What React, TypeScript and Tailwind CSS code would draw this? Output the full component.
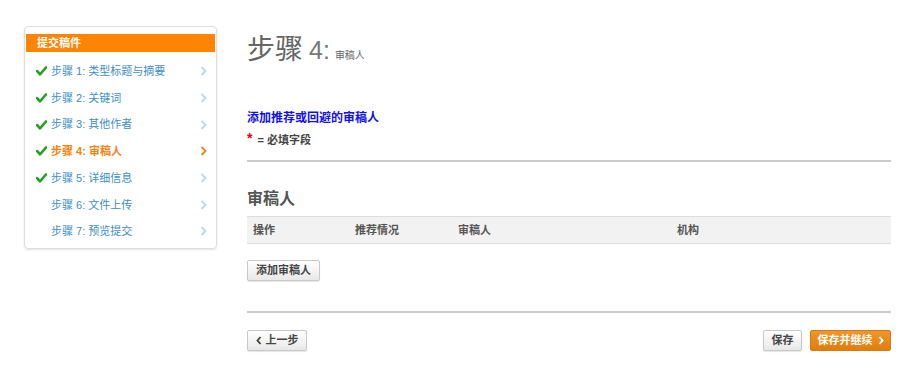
import React from "react";

const steps = [
  { label: "步骤 1: 类型标题与摘要", done: true },
  { label: "步骤 2: 关键词", done: true },
  { label: "步骤 3: 其他作者", done: true },
  { label: "步骤 4: 审稿人", done: true, active: true },
  { label: "步骤 5: 详细信息", done: true },
  { label: "步骤 6: 文件上传", done: false },
  { label: "步骤 7: 预览提交", done: false },
];

function Check() {
  return (
    <svg width="11" height="10" viewBox="0 0 11 10" className="shrink-0">
      <path d="M1.2 5.2 L4 8.3 L10 1.5" fill="none" stroke="#22a01e" strokeWidth="2.6" strokeLinecap="round" strokeLinejoin="round" />
    </svg>
  );
}

function Chevron({ color }: { color: string }) {
  return (
    <svg width="7" height="10" viewBox="0 0 7 10">
      <path d="M1.5 1 L5.5 5 L1.5 9" fill="none" stroke={color} strokeWidth="1.8" />
    </svg>
  );
}

export default function App() {
  return (
    <div
      className="w-[900px] h-[380px] bg-white flex gap-[30px] pl-[24px] pt-[26px] text-[#555]"
      style={{ fontFamily: '"Liberation Sans", "Noto Sans CJK SC", sans-serif' }}
    >
      {/* sidebar */}
      <div className="w-[193px] h-[223px] shrink-0 rounded-[4px] border border-[#ddd] shadow-[0_1px_2px_rgba(0,0,0,0.12)] pt-[7px] px-[1px]">
        <div className="h-[18px] bg-[#ff8400] text-white text-[11px] font-bold leading-[18px] pl-[11px]">
          提交稿件
        </div>
        <ul className="pt-[6px]">
          {steps.map((s) => (
            <li key={s.label} className="h-[26.7px] flex items-center pl-[10px] pr-[8px]">
              <span className="w-[15px] flex">{s.done && <Check />}</span>
              <span
                className={
                  s.active
                    ? "flex-1 text-[11px] font-bold text-[#f7830f]"
                    : "flex-1 text-[11px] text-[#3d8fc6]"
                }
              >
                {s.label}
              </span>
              <Chevron color={s.active ? "#f7830f" : "#b7d9ee"} />
            </li>
          ))}
        </ul>
      </div>

      {/* main */}
      <div className="w-[644px] flex flex-col">
        <div className="flex items-baseline text-[#666] mt-[8px] h-[32px]">
          <span className="text-[28px] leading-[32px]">步骤</span>
          <span className="text-[25px] leading-[32px] ml-[6px] font-light text-[#777]">4:</span>
          <span className="text-[10px] ml-[5px]">审稿人</span>
        </div>

        <div className="mt-[43px] text-[12px] font-bold text-[#1010f0]">添加推荐或回避的审稿人</div>
        <div className="mt-[5px] text-[11px] font-bold text-[#444] flex items-start">
          <span className="text-[#e00] text-[14px] leading-[12px] mr-[5px]">*</span>
          <span className="leading-[16px]">= 必填字段</span>
        </div>

        <div className="mt-[12px] h-[2px] bg-[#ccc]" />

        <div className="mt-[25px] text-[16px] font-bold text-[#555]">审稿人</div>

        <div className="mt-[5px] h-[28px] bg-[#f2f2f2] border-y border-[#ddd] grid grid-cols-[102px_103px_219px_1fr] items-center pl-[6px] text-[11px] font-bold text-[#555]">
          <span>操作</span>
          <span>推荐情况</span>
          <span>审稿人</span>
          <span>机构</span>
        </div>

        <div className="mt-[13px]">
          <button className="h-[21px] px-[8px] text-[11px] font-bold text-[#444] border border-[#c8c8c8] rounded-[2px] bg-gradient-to-b from-white to-[#e8e8e8] shadow-[0_1px_1px_rgba(0,0,0,0.1)]">
            添加审稿人
          </button>
        </div>

        <div className="mt-[30px] h-[2px] bg-[#ccc]" />

        <div className="mt-[17px] flex items-center">
          <button className="h-[21px] w-[60px] flex items-center justify-center gap-[4px] text-[11px] font-bold text-[#444] border border-[#c8c8c8] rounded-[2px] bg-gradient-to-b from-white to-[#e8e8e8] shadow-[0_1px_1px_rgba(0,0,0,0.1)]">
            <svg width="6" height="9" viewBox="0 0 6 9">
              <path d="M4.5 1 L1.5 4.5 L4.5 8" fill="none" stroke="#444" strokeWidth="1.9" />
            </svg>
            上一步
          </button>
          <div className="flex-1" />
          <button className="h-[21px] w-[39px] text-[11px] font-bold text-[#444] border border-[#c8c8c8] rounded-[2px] bg-gradient-to-b from-white to-[#e8e8e8] shadow-[0_1px_1px_rgba(0,0,0,0.1)]">
            保存
          </button>
          <button className="ml-[8px] h-[21px] w-[81px] flex items-center justify-center gap-[5px] text-[11px] font-bold text-white border border-[#d87a0c] rounded-[2px] bg-gradient-to-b from-[#f0962a] to-[#e07e0c]">
            保存并继续
            <svg width="6" height="9" viewBox="0 0 6 9">
              <path d="M1.5 1 L4.5 4.5 L1.5 8" fill="none" stroke="#fff" strokeWidth="1.9" />
            </svg>
          </button>
        </div>
      </div>
    </div>
  );
}
